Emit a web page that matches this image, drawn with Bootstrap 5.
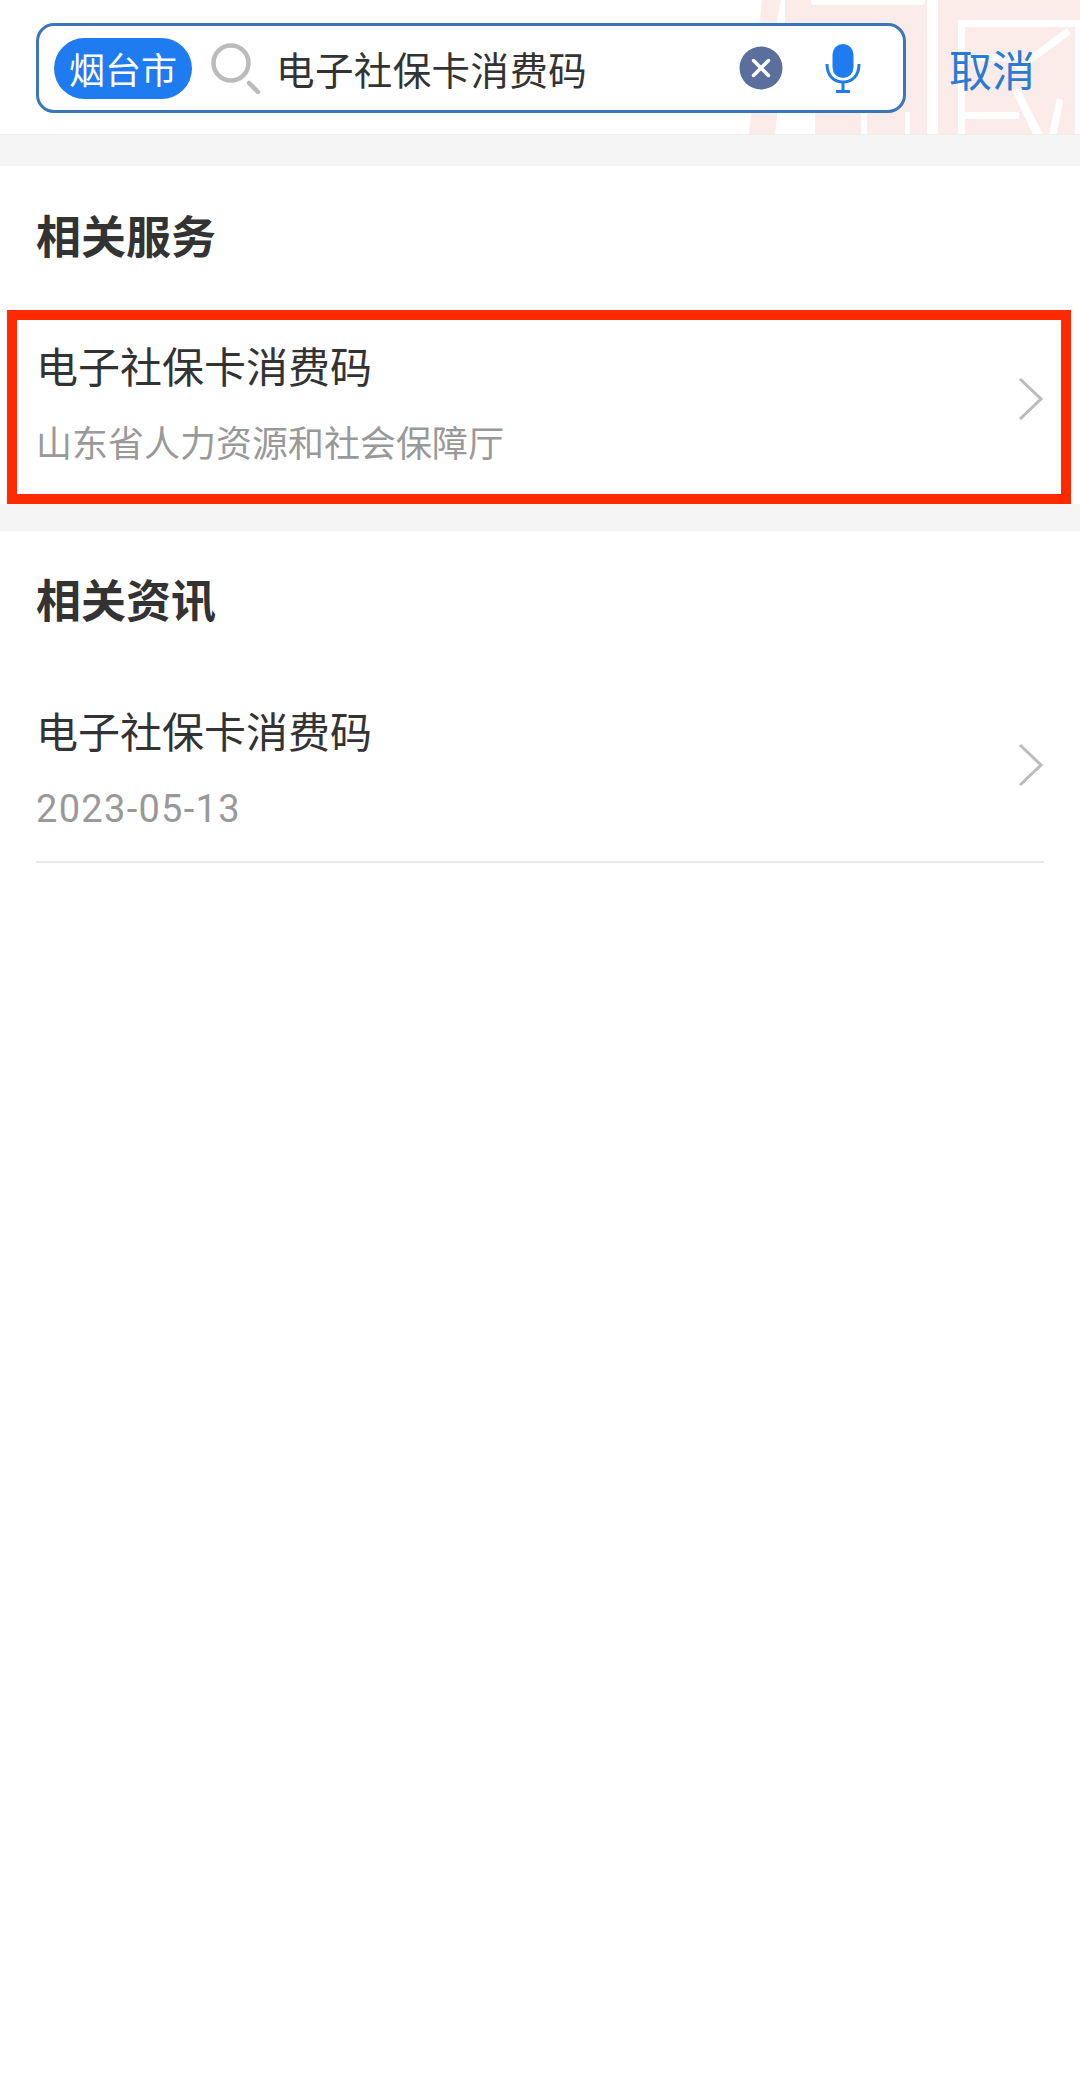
<!DOCTYPE html>
<html lang="zh-CN">
<head>
    <meta charset="UTF-8">
    <meta name="viewport" content="width=device-width, initial-scale=1.0">
    <title>搜索结果</title>
    <link href="https://cdn.jsdelivr.net/npm/bootstrap@5.3.0/dist/css/bootstrap.min.css" rel="stylesheet">
    <style>
        body { background: #fff; font-family: "Noto Sans CJK SC", sans-serif; color: #333; }
        .top-bar { height: 134px; padding: 23px 0 0 36px; }
        .seal-bg { top: 0; right: 0; width: 335px; height: 134px; }
        .search-box { width: 870px; height: 90px; border: 3px solid #3a76b8; border-radius: 18px; background: #fff; padding: 0 15px; }
        .city-pill { width: 138px; height: 61px; background: #1f7bf0; color: #fff; font-size: 36px; line-height: 1; border-radius: 31px; }
        .search-ico { width: 50px; height: 52px; margin-left: 19px; }
        .search-text { font-size: 38.5px; line-height: 1; margin-left: 15px; letter-spacing: .4px; }
        .clear-ico { width: 44px; height: 44px; }
        .mic-ico { width: 36px; height: 50px; margin-left: 42px; margin-right: 27px; }
        .cancel-link { font-size: 43px; line-height: 1; color: #2a7bd4; margin-left: 43px; height: 90px; }
        .gray-band { height: 32px; background: #f5f5f5; border-top: 1px solid #eee; }
        .gray-band.second { height: 27px; border-top: 0; }
        .sec-title { font-size: 45px; font-weight: 700; line-height: 1; color: #333; padding-left: 36px; }
        .first-sec { height: 144px; padding-top: 46px; }
        .news-sec { height: 138px; padding-top: 45px; }
        .result-row { margin: 0 9px 0 7px; height: 194px; border: 10px solid #ff2a00; padding: 0 17px 12px 19px; }
        .news-row { margin: 0 36px; height: 194px; border-bottom: 2px solid #e8e8e8; padding-top: 7px; }
        .item-name { font-size: 42px; line-height: 1; color: #333; }
        .item-sub { font-size: 36px; line-height: 1; color: #999; margin-top: 37px; }
        .item-date { font-family: Roboto, sans-serif; font-size: 38px; line-height: 1; color: #999; margin-top: 39px; letter-spacing: 1.3px; }
        .chevron { width: 26px; height: 44px; margin-bottom: 4px; }
        .news-row .chevron { margin-bottom: 8px; }
    </style>
</head>
<body>
    <!-- barra de busca com o selo ao fundo -->
    <div class="top-bar position-relative d-flex align-items-start">
        <svg class="seal-bg position-absolute" viewBox="0 0 335 134" fill="#fbecea">
            <path d="M17 0H36L24 60H38L30 134H12L4 134Z"/>
            <path d="M40 0H182V134H70V60H40Z"/>
            <rect x="193" width="142" height="134"/>
            <g fill="#fff">
                <rect x="66" y="-4" width="114" height="9" rx="4"/>
                <rect x="50" y="112" width="5" height="22"/>
                <rect x="116" y="112" width="6" height="22"/>
                <rect x="160" y="112" width="5" height="22"/>
                <rect x="213" y="20" width="124" height="7"/>
                <rect x="213" y="20" width="7" height="114"/>
                <rect x="330" y="20" width="7" height="114"/>
                <rect x="220" y="54" width="54" height="7"/>
                <rect x="220" y="112" width="54" height="7"/>
                <path d="M270 66 322 28 326 34 274 72ZM268 92 274 88 298 134H288ZM304 134 312 98 318 100 312 134Z"/>
            </g>
        </svg>
        <div class="search-box position-relative d-flex align-items-center">
            <div class="city-pill d-flex align-items-center justify-content-center">烟台市</div>
            <svg class="search-ico flex-shrink-0" viewBox="0 0 50 52" fill="none" stroke="#bbb">
                <circle cx="20" cy="21" r="17.5" stroke-width="4.5"/>
                <path d="M38 41 47 50" stroke-width="4.5" stroke-linecap="round"/>
            </svg>
            <span class="search-text">电子社保卡消费码</span>
            <svg class="clear-ico ms-auto flex-shrink-0" viewBox="0 0 44 44">
                <circle cx="22" cy="22" r="21.5" fill="#5a6f9c"/>
                <path d="M14.5 14.5 29.5 29.5M29.5 14.5 14.5 29.5" stroke="#fff" stroke-width="3.4" stroke-linecap="round"/>
            </svg>
            <svg class="mic-ico flex-shrink-0" viewBox="0 0 36 50" fill="none" stroke="#1f7bf0">
                <rect x="7.5" y="1" width="21" height="34" rx="10.5" fill="#1f7bf0" stroke="none"/>
                <path d="M2 21C2 33 9 39 18 39S34 33 34 21" stroke-width="3"/>
                <path d="M18 39V48M11 48.5H25" stroke-width="3"/>
            </svg>
        </div>
        <span class="cancel-link position-relative d-flex align-items-center">取消</span>
    </div>
    <div class="gray-band"></div>

    <div class="first-sec"><div class="sec-title">相关服务</div></div>
    <div class="result-row d-flex align-items-center justify-content-between">
        <div>
            <div class="item-name">电子社保卡消费码</div>
            <div class="item-sub">山东省人力资源和社会保障厅</div>
        </div>
        <svg class="chevron flex-shrink-0" viewBox="0 0 26 44" fill="none" stroke="#bbb" stroke-width="3"><path d="M2 2 23 22 2 42"/></svg>
    </div>
    <div class="gray-band second"></div>

    <div class="news-sec"><div class="sec-title">相关资讯</div></div>
    <div class="news-row d-flex align-items-center justify-content-between">
        <div>
            <div class="item-name">电子社保卡消费码</div>
            <div class="item-date">2023-05-13</div>
        </div>
        <svg class="chevron flex-shrink-0" viewBox="0 0 26 44" fill="none" stroke="#bbb" stroke-width="3"><path d="M2 2 23 22 2 42"/></svg>
    </div>

    <script src="https://cdn.jsdelivr.net/npm/bootstrap@5.3.0/dist/js/bootstrap.bundle.min.js"></script>
</body>
</html>
